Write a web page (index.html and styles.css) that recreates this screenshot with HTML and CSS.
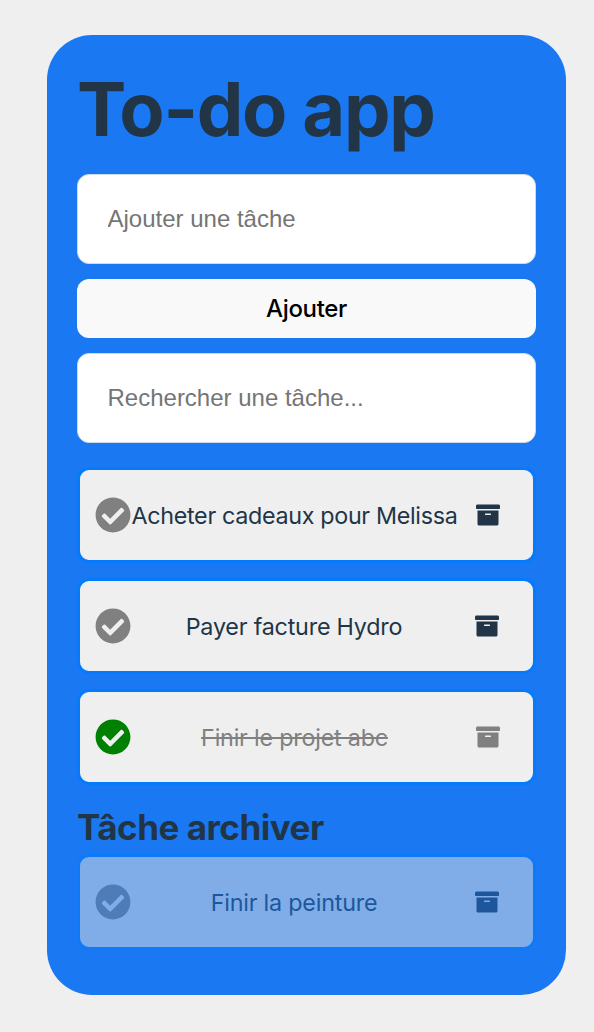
FILE: index.html
```html
<!DOCTYPE html>
<html lang="fr">
<head>
<meta charset="utf-8">
<title>To-do app</title>
<link rel="stylesheet" href="styles.css">
</head>
<body>
<svg class="sprite" aria-hidden="true">
  <symbol id="check" viewBox="0 0 512 512"><path d="M504 256c0 136.967-111.033 248-248 248S8 392.967 8 256 119.033 8 256 8s248 111.033 248 248zM227.314 387.314l184-184c6.248-6.248 6.248-16.379 0-22.627l-22.627-22.627c-6.248-6.249-16.379-6.249-22.628 0L216 308.118l-70.059-70.059c-6.248-6.248-16.379-6.248-22.628 0l-22.627 22.627c-6.248 6.248-6.248 16.379 0 22.627l104 104c6.249 6.249 16.379 6.249 22.628.001z"/></symbol>
  <symbol id="archive" viewBox="0 0 512 512"><path d="M32 448c0 17.7 14.3 32 32 32h384c17.7 0 32-14.3 32-32V160H32v288zm160-212c0-6.6 5.4-12 12-12h104c6.6 0 12 5.4 12 12v8c0 6.6-5.4 12-12 12H204c-6.6 0-12-5.4-12-12v-8zM480 32H32C14.3 32 0 46.3 0 64v48c0 8.8 7.2 16 16 16h480c8.8 0 16-7.2 16-16V64c0-17.7-14.3-32-32-32z"/></symbol>
</svg>
<main class="app">
  <h1 class="title">To-do app</h1>
  <form class="controls">
    <input class="field" type="text" placeholder="Ajouter une tâche">
    <button class="add" type="button">Ajouter</button>
    <input class="field" type="text" placeholder="Rechercher une tâche...">
  </form>
  <ul class="tasks">
    <li class="task wide">
      <svg class="check"><use href="#check"/></svg>
      <span class="label long">Acheter cadeaux pour Melissa</span>
      <svg class="archive"><use href="#archive"/></svg>
    </li>
    <li class="task">
      <svg class="check"><use href="#check"/></svg>
      <span class="label">Payer facture Hydro</span>
      <svg class="archive"><use href="#archive"/></svg>
    </li>
    <li class="task done wide">
      <svg class="check"><use href="#check"/></svg>
      <span class="label">Finir le projet abc</span>
      <svg class="archive"><use href="#archive"/></svg>
    </li>
  </ul>
  <h2 class="subtitle">Tâche archiver</h2>
  <ul class="tasks">
    <li class="task archived">
      <svg class="check"><use href="#check"/></svg>
      <span class="label">Finir la peinture</span>
      <svg class="archive"><use href="#archive"/></svg>
    </li>
  </ul>
</main>
</body>
</html>
```
FILE: styles.css
```css
* { box-sizing: border-box; }

body {
  margin: 0;
  padding: 35px 28px 37px 47px;
  background: #efefef;
  color: #213547;
  font-family: Inter, "Liberation Sans", sans-serif;
}

.sprite { display: none; }

.app {
  height: 960px;
  padding: 30px;
  border-radius: 45px;
  background: #1a79f2;
}

.title {
  margin: 0;
  height: 109px;
  font-size: 74px;
  line-height: 89px;
  font-weight: 700;
  letter-spacing: -1.3px;
  white-space: nowrap;
}

.controls {
  display: flex;
  flex-direction: column;
  gap: 15px;
  margin: 0 0 24px;
}

.field {
  width: 100%;
  height: 90px;
  padding: 0 30px 0 29.5px;
  border: 1px solid #ccdcec;
  border-radius: 12px;
  background: #fff;
  font: 24px "Liberation Sans", sans-serif;
}

.field::placeholder { color: #757575; }

.add {
  height: 59px;
  padding: 0;
  border: 0;
  border-radius: 12px;
  background: #f9f9f9;
  color: #000;
  font: 500 24px Inter, sans-serif;
  letter-spacing: -0.35px;
}

.tasks {
  display: flex;
  flex-direction: column;
  gap: 15px;
  margin: 0;
  padding: 0;
  list-style: none;
}

.task {
  display: flex;
  align-items: center;
  height: 96px;
  padding: 0 34px 0 15px;
  border: 3px solid #057bfc;
  border-radius: 12px;
  background: #efefef;
}

.task.wide { padding-right: 33px; }

.check {
  flex: none;
  width: 36px;
  height: 36px;
  fill: #808080;
}

.label {
  flex: 1;
  min-width: 0;
  margin-right: 18px;
  padding-top: 2px;
  font-size: 23.3px;
  line-height: 36px;
  letter-spacing: -0.2px;
  text-align: center;
  white-space: nowrap;
}

.label.long { letter-spacing: -0.32px; }

.archive {
  flex: none;
  width: 24px;
  height: 24px;
  fill: #213547;
}

.done { color: #808080; }
.done .label { text-decoration: line-through; }
.done .check { fill: #008000; }
.done .archive { fill: #808080; }

.archived {
  background: #e6e2de;
  opacity: 0.5;
}

.subtitle {
  margin: 19px 0 4px;
  font-size: 35px;
  line-height: 46px;
  font-weight: 700;
  letter-spacing: -0.5px;
  white-space: nowrap;
}
```
